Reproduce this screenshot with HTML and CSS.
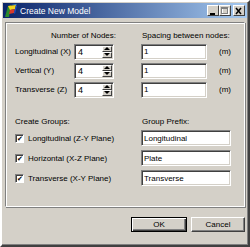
FILE: index.html
```html
<!DOCTYPE html>
<html>
<head>
  <title>Create New Model</title>
  <link rel="stylesheet" href="styles.css">
</head>
<body>
  <div class="window">
    <div class="titlebar">
      <svg class="app-icon" width="14" height="14" viewBox="0 0 14 14">
        <polygon points="1,13 4,2 7,1 5,13" fill="#2a8a2a"/>
        <polygon points="4,2 12,1 11,5 6,6" fill="#f2d21b"/>
        <polygon points="6,6 11,5 10,9 5,10" fill="#d83a2a"/>
        <polygon points="7,1 13,0 12,1" fill="#3aa0e0"/>
        <polygon points="10,9 12,1 13,2 11,10" fill="#1b4fc0"/>
      </svg>
      <span class="title">Create New Model</span>
      <div class="caption-buttons">
        <span class="cap-btn">
          <svg width="12" height="10" viewBox="0 0 12 10"><rect x="3" y="7" width="5" height="2" fill="#000"/></svg>
        </span>
        <span class="cap-btn">
          <svg width="12" height="10" viewBox="0 0 12 10">
            <rect x="3.5" y="2.5" width="6" height="6" fill="none" stroke="#fff"/>
            <rect x="2.5" y="1.5" width="6" height="6" fill="none" stroke="#808080"/>
            <line x1="2.5" y1="2.5" x2="8.5" y2="2.5" stroke="#808080"/>
          </svg>
        </span>
        <span class="cap-btn close">
          <svg width="12" height="10" viewBox="0 0 12 10">
            <path d="M3 2 L8 8 M8 2 L3 8" stroke="#000" stroke-width="1.5"/>
          </svg>
        </span>
      </div>
    </div>

    <div class="client">
      <div class="panel">
        <div class="row head">
          <span class="head-nodes">Number of Nodes:</span>
          <span class="head-right">Spacing between nodes:</span>
        </div>

        <div class="row">
          <span class="axis">Longitudinal (X)</span>
          <div class="spin">
            <span class="spin-value">4</span>
            <div class="spin-arrows">
              <span class="spin-btn"><span class="tri-up"></span></span>
              <span class="spin-btn"><span class="tri-down"></span></span>
            </div>
          </div>
          <input class="field spacing" type="text" value="1">
          <span class="unit">(m)</span>
        </div>

        <div class="row">
          <span class="axis">Vertical (Y)</span>
          <div class="spin">
            <span class="spin-value">4</span>
            <div class="spin-arrows">
              <span class="spin-btn"><span class="tri-up"></span></span>
              <span class="spin-btn"><span class="tri-down"></span></span>
            </div>
          </div>
          <input class="field spacing" type="text" value="1">
          <span class="unit">(m)</span>
        </div>

        <div class="row">
          <span class="axis">Transverse (Z)</span>
          <div class="spin">
            <span class="spin-value">4</span>
            <div class="spin-arrows">
              <span class="spin-btn"><span class="tri-up"></span></span>
              <span class="spin-btn"><span class="tri-down"></span></span>
            </div>
          </div>
          <input class="field spacing" type="text" value="1">
          <span class="unit">(m)</span>
        </div>

        <div class="row head groups-head">
          <span class="head-groups">Create Groups:</span>
          <span>Group Prefix:</span>
        </div>

        <div class="row check-row">
          <label class="check-label"><span class="checkbox">&#10004;</span>Longitudinal (Z-Y Plane)</label>
          <input class="field prefix" type="text" value="Longitudinal">
        </div>

        <div class="row check-row">
          <label class="check-label"><span class="checkbox">&#10004;</span>Horizontal (X-Z Plane)</label>
          <input class="field prefix" type="text" value="Plate">
        </div>

        <div class="row check-row">
          <label class="check-label"><span class="checkbox">&#10004;</span>Transverse (X-Y Plane)</label>
          <input class="field prefix" type="text" value="Transverse">
        </div>
      </div>

      <div class="actions">
        <button class="btn default">OK</button>
        <button class="btn">Cancel</button>
      </div>
    </div>
  </div>
</body>
</html>
```

FILE: styles.css
```css
body {
  margin: 0;
  font-family: "Liberation Sans", Arial, sans-serif;
  font-size: 8px;
  color: #000;
  background: #d4d0c8;
}

.window {
  box-sizing: border-box;
  width: 250px;
  height: 247px;
  padding: 1px;
  background: #d4d0c8;
  border-style: solid;
  border-width: 2px;
  border-color: #ffffff #404040 #404040 #ffffff;
  box-shadow: inset -1px -1px #808080;
  display: flex;
  flex-direction: column;
}

.titlebar {
  height: 15px;
  display: flex;
  align-items: center;
  padding-left: 1px;
  background: linear-gradient(to right, #0a246a, #a6caf0);
  color: #fff;
}

.app-icon {
  flex: none;
}

.title {
  margin-left: 2px;
  font-size: 8.5px;
}

.caption-buttons {
  margin-left: auto;
  margin-right: 2px;
  display: flex;
}

.cap-btn {
  box-sizing: border-box;
  width: 12px;
  height: 11px;
  background: #d4d0c8;
  border-style: solid;
  border-width: 1px;
  border-color: #fff #404040 #404040 #fff;
  display: flex;
  align-items: center;
  justify-content: center;
}

.cap-btn svg {
  flex: none;
}

.cap-btn.close {
  margin-left: 2px;
}

.client {
  flex: 1;
  display: flex;
  flex-direction: column;
}

.panel {
  box-sizing: border-box;
  height: 185px;
  margin: 4px 2px 0 2px;
  padding: 5px 0 0 9px;
  border: 1px solid #808080;
  border-right-color: #fff;
  border-bottom-color: #fff;
  box-shadow: inset 1px 1px #fff, 1px 1px #808080;
}

.row {
  display: flex;
  align-items: center;
  height: 19px;
}

.row.head {
  height: 14px;
}

.head-nodes {
  width: 101px;
  text-align: right;
}

.head-right {
  margin-left: 26px;
}

.axis {
  width: 59px;
}

.spin {
  box-sizing: border-box;
  width: 40px;
  height: 16px;
  background: #fff;
  border-style: solid;
  border-width: 1px;
  border-color: #808080 #fff #fff #808080;
  box-shadow: inset 1px 1px #404040, inset -1px -1px #d4d0c8;
  display: flex;
  align-items: stretch;
  padding: 1px;
}

.spin-value {
  flex: 1;
  padding-left: 2px;
  font-size: 9px;
  line-height: 12px;
}

.spin-arrows {
  width: 10px;
  display: flex;
  flex-direction: column;
}

.spin-btn {
  flex: 1;
  box-sizing: border-box;
  background: #d4d0c8;
  border-style: solid;
  border-width: 1px;
  border-color: #fff #404040 #404040 #fff;
  display: flex;
  align-items: center;
  justify-content: center;
}

.tri-up {
  width: 0;
  height: 0;
  border-left: 3px solid transparent;
  border-right: 3px solid transparent;
  border-bottom: 3px solid #000;
}

.tri-down {
  width: 0;
  height: 0;
  border-left: 3px solid transparent;
  border-right: 3px solid transparent;
  border-top: 3px solid #000;
}

.field {
  box-sizing: border-box;
  height: 16px;
  margin: 0;
  padding: 0 2px;
  font: inherit;
  color: #000;
  background: #fff;
  border-style: solid;
  border-width: 1px;
  border-color: #808080 #fff #fff #808080;
  box-shadow: inset 1px 1px #404040, inset -1px -1px #d4d0c8;
  outline: none;
}

.field.spacing {
  width: 66px;
  margin-left: 27px;
}

.unit {
  margin-left: 12px;
}

.groups-head {
  margin-top: 15px;
}

.head-groups {
  width: 127px;
}

.check-row {
  height: 20px;
}

.check-label {
  width: 126px;
  display: flex;
  align-items: center;
}

.checkbox {
  box-sizing: border-box;
  width: 9px;
  height: 9px;
  margin-right: 4px;
  background: #fff;
  border-style: solid;
  border-width: 1px;
  border-color: #808080 #fff #fff #808080;
  box-shadow: inset 1px 1px #404040;
  font-size: 7px;
  line-height: 7px;
  text-align: center;
}

.field.prefix {
  width: 90px;
}

.actions {
  display: flex;
  justify-content: flex-end;
  gap: 4px;
  margin: 10px 2px 0 0;
}

.btn {
  box-sizing: border-box;
  width: 54px;
  height: 15px;
  padding: 0;
  font: inherit;
  color: #000;
  background: #d4d0c8;
  border-style: solid;
  border-width: 1px;
  border-color: #fff #404040 #404040 #fff;
  box-shadow: inset -1px -1px #808080;
}

.btn.default {
  width: 56px;
  border-color: #000;
  box-shadow: inset 1px 1px #fff, inset -1px -1px #404040, inset -2px -2px #808080;
}
```
